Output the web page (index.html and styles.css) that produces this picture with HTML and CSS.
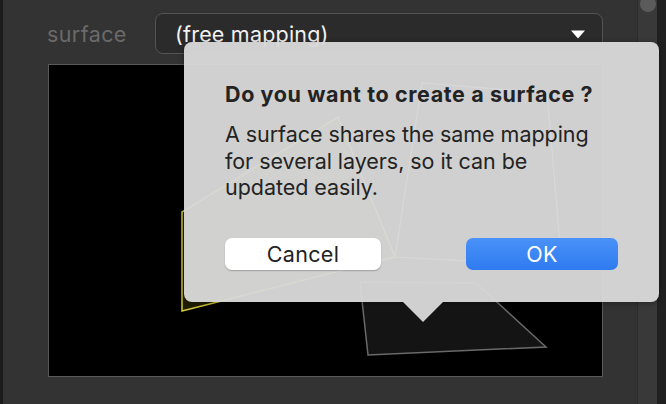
FILE: index.html
```html
<!DOCTYPE html>
<html lang="en">
<head>
  <meta charset="UTF-8">
  <meta name="viewport" content="width=device-width, initial-scale=1.0">
  <title>Surface mapping</title>
  <link rel="stylesheet" href="styles.css">
</head>
<body>

<div class="app">
  <div class="edge-left"></div>

  <div class="panel">
    <div class="surface-row">
      <label class="surface-label" for="surface">surface</label>
      <div class="dropdown" id="surface">
        <span>(free mapping)</span>
        <svg class="dropdown-arrow" width="16" height="9" viewBox="0 0 16 9"><path d="M1 0.5 L15 0.5 L8 8.5 Z" fill="#fff"/></svg>
      </div>
    </div>

    <div class="canvas">
      <svg width="553" height="311" viewBox="49 65 553 311">
        <!-- selected layer -->
        <polygon points="182,212 338,117 395,257 182,311" fill="rgba(70,66,0,0.45)" stroke="#d2c83a" stroke-width="1.5"/>
        <!-- other layers -->
        <polygon points="395,257 422,83 547,93 562,266" fill="none" stroke="#cfcfcf" stroke-width="1.2"/>
        <polygon points="360,282 476,283 546,347 368,355" fill="#141414" stroke="#6a6a6a" stroke-width="1.5"/>
      </svg>
    </div>

    <div class="popover">
      <h1 class="popover-title">Do you want to create a surface ?</h1>
      <p class="popover-text">A surface shares the same mapping for several layers, so it can be updated easily.</p>
      <div class="popover-buttons">
        <button class="btn btn-cancel">Cancel</button>
        <button class="btn btn-ok">OK</button>
      </div>
    </div>
  </div>

  <div class="scrollbar"><div class="scroll-thumb"></div></div>
  <div class="edge-right"></div>
</div>

</body>
</html>
```

FILE: styles.css
```css
html, body {
  margin: 0;
  height: 100%;
  background: #333333;
  font-family: Inter, "Noto Sans", sans-serif;
  overflow: hidden;
}
.app {
  display: flex;
  height: 404px;
}
.edge-left {
  width: 3px;
  background: #1b1b1b;
}
.edge-right {
  width: 9px;
  background: #202020;
}
.scrollbar {
  width: 20px;
  background: #393939;
  border-left: 1px solid #2c2c2c;
  box-sizing: border-box;
}
.scroll-thumb {
  width: 16px;
  height: 16px;
  margin: -4px auto 0;
  border-radius: 8px;
  background: #5b5b5b;
}
.panel {
  flex: 1;
  position: relative;
  padding: 13px 34px 0 45px;
}

/* top row */
.surface-row {
  display: flex;
  align-items: center;
  height: 41px;
}
.surface-label {
  width: 108px;
  margin-left: -1px;
  color: #6a6a6a;
  font-size: 21.5px;
  letter-spacing: 0.4px;
}
.dropdown {
  flex: 1;
  height: 41px;
  box-sizing: border-box;
  display: flex;
  align-items: center;
  justify-content: space-between;
  padding: 0 16px 0 19px;
  border: 1.5px solid #545454;
  border-radius: 8px;
  background: #2b2b2b;
  color: #f2f2f2;
  font-size: 21.5px;
  letter-spacing: 0.2px;
}
.dropdown-arrow {
  display: block;
  margin-top: 2px;
}

/* mapping canvas */
.canvas {
  margin-top: 10px;
  width: 555px;
  height: 313px;
  box-sizing: border-box;
  border: 1px solid #5a5a5a;
  background: #000;
}
.canvas svg {
  display: block;
}

/* popover dialog */
.popover {
  position: absolute;
  left: 181px;
  top: 42px;
  width: 475px;
  height: 260px;
  box-sizing: border-box;
  padding: 39px 30px 0 41px;
  background: rgba(216, 216, 216, 0.96);
  border-radius: 8px;
  box-shadow: 0 1px 6px rgba(0, 0, 0, 0.35);
  color: #232323;
}
.popover::after {
  content: "";
  position: absolute;
  left: 219px;
  bottom: -20px;
  border-left: 20px solid transparent;
  border-right: 20px solid transparent;
  border-top: 20px solid rgba(216, 216, 216, 0.96);
}
.popover-title {
  margin: 0;
  font-size: 21.5px;
  font-weight: 700;
  line-height: 26px;
  letter-spacing: 0.6px;
}
.popover-text {
  margin: 14px 0 0;
  max-width: 384px;
  font-size: 21.5px;
  line-height: 26.5px;
  letter-spacing: -0.05px;
}
.popover-buttons {
  display: flex;
  justify-content: space-between;
  margin-top: 37px;
  margin-right: 11px;
}
.btn {
  height: 32px;
  border: none;
  border-radius: 7px;
  font-family: inherit;
  font-size: 21.5px;
  letter-spacing: 0.3px;
  padding: 0;
}
.btn-cancel {
  width: 156px;
  background: #fff;
  color: #222;
  box-shadow: 0 1px 1.5px rgba(0, 0, 0, 0.25);
}
.btn-ok {
  width: 152px;
  background: linear-gradient(#4a92f8, #2f7bf0);
  color: #fff;
}
```
